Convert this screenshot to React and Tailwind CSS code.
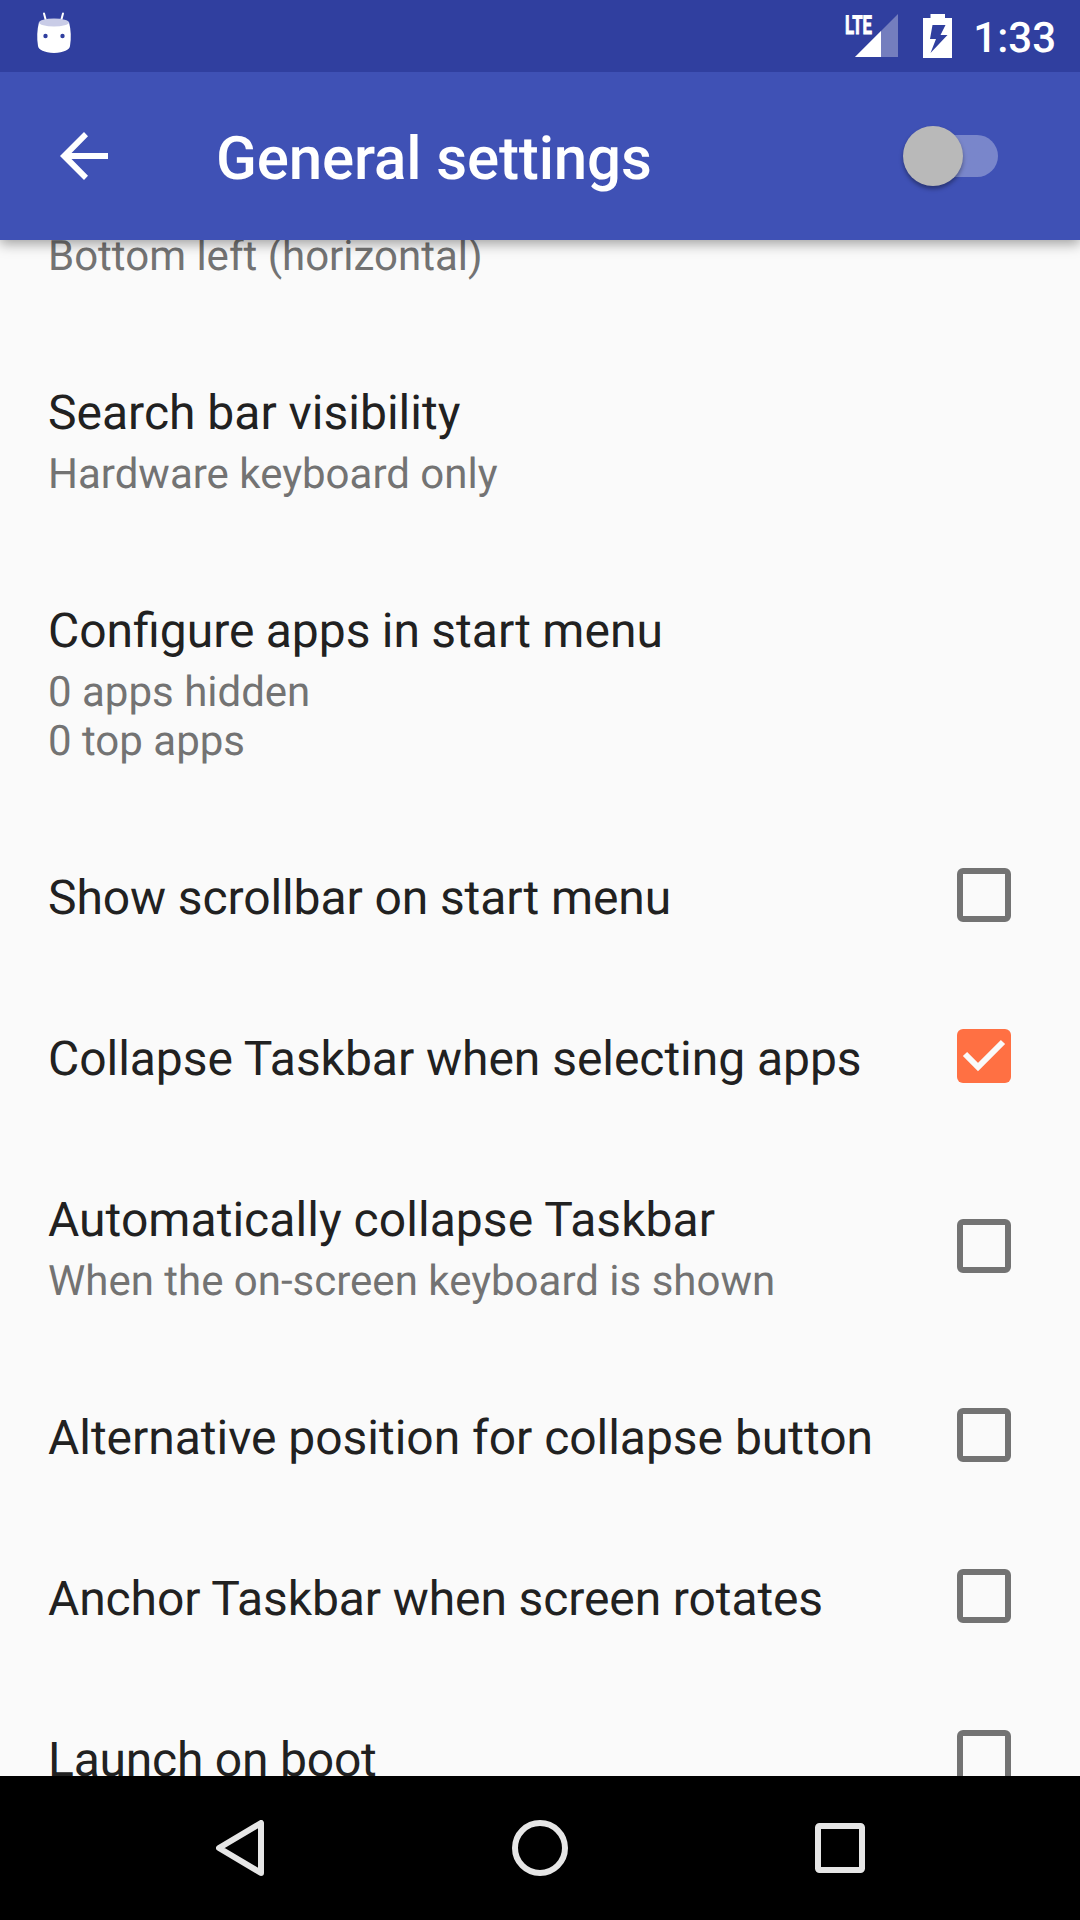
const items = [
  { title: "Search bar visibility", lines: ["Hardware keyboard only"], height: "h-[218px]" },
  { title: "Configure apps in start menu", lines: ["0 apps hidden", "0 top apps"], height: "h-[267px]", spacing: "[word-spacing:-0.6px]" },
  { title: "Show scrollbar on start menu", lines: [], height: "h-[161px]", check: true, spacing: "tracking-[-0.1px]" },
  { title: "Collapse Taskbar when selecting apps", lines: [], height: "h-[161px]", check: true, on: true, spacing: "tracking-[-0.04px]" },
  { title: "Automatically collapse Taskbar", lines: ["When the on-screen keyboard is shown"], height: "h-[218px]", check: true, spacing: "tracking-[0.05px]" },
  { title: "Alternative position for collapse button", lines: [], height: "h-[161px]", check: true, spacing: "tracking-[-0.03px]" },
  { title: "Anchor Taskbar when screen rotates", lines: [], height: "h-[161px]", check: true, spacing: "tracking-[-0.11px]" },
  { title: "Launch on boot", lines: [], height: "h-[161px]", check: true, spacing: "tracking-[-0.22px]" },
];

function Checkbox({ on }) {
  return (
    <svg className="mr-[21px] mt-px size-[54px] shrink-0" viewBox="0 0 54 54" fill="none">
      {on ? (
        <>
          <rect width="54" height="54" rx="6" fill="#ff7043" />
          <path d="M8 25L21 38L46 13" stroke="#fafafa" strokeWidth="6" />
        </>
      ) : (
        <path fillRule="evenodd" fill="#737373" d="M6 0H48A6 6 0 0 1 54 6V48A6 6 0 0 1 48 54H6A6 6 0 0 1 0 48V6A6 6 0 0 1 6 0ZM6 6V48H48V6Z" />
      )}
    </svg>
  );
}

function NotificationIcon() {
  return (
    <svg className="mt-[-6px] h-[42px] w-[36px]" viewBox="0 0 36 42">
      <path d="M8 1.5L10 9M27 1.5L25 9" stroke="#fff" strokeWidth="2" strokeLinecap="round" />
      <path d="M3 10C8 15 28 15 33 10Q36 22 34 34Q33 40 18 41Q3 40 2 34Q0 22 3 10Z" fill="#fff" />
      <ellipse cx="18" cy="10.5" rx="15" ry="4" fill="#c9cce7" />
      <circle cx="9.5" cy="24" r="2.2" fill="#303f9f" />
      <circle cx="26.5" cy="24" r="2.2" fill="#303f9f" />
    </svg>
  );
}

function SignalIcon() {
  return (
    <svg className="ml-auto h-[72px] w-[53px]" viewBox="0 0 53 72">
      <path d="M10 57L53 14V57Z" fill="#fff" fillOpacity="0.33" />
      <path d="M10 57L36 31V57Z" fill="#fff" />
      <text x="0" y="33.5" textLength="27" lengthAdjust="spacingAndGlyphs" fill="#fff" stroke="#fff" strokeWidth="0.9" fontSize="26" fontWeight="700">LTE</text>
    </svg>
  );
}

function BatteryIcon() {
  return (
    <svg className="ml-[25px] h-[44px] w-[29px]" viewBox="0 0 29 44">
      <path fillRule="evenodd" fill="#fff" d="M7.5 0H22V4H29V44H0V4H7.5ZM9.5 11L7 25H13L7.5 39L24.5 21H17.5L22.5 11Z" />
    </svg>
  );
}

export default function App() {
  return (
    <div className="flex h-[1920px] w-[1080px] flex-col overflow-hidden bg-[#fafafa] font-['Roboto',sans-serif] [text-rendering:geometricPrecision]">
      <header className="z-10 shrink-0 bg-[#3f51b5] text-white shadow-[0_4px_12px_rgba(0,0,0,0.36)]">
        <div className="flex h-[72px] items-center bg-[#303f9f] pl-[36px] pr-[24px]">
          <NotificationIcon />
          <SignalIcon />
          <BatteryIcon />
          <span className="ml-[21px] mt-[4px] text-[42px] font-medium">1:33</span>
        </div>
        <div className="flex h-[168px] items-center pl-[60px] pr-[82px]">
          <svg className="size-[48px]" viewBox="0 0 48 48"><path fill="#fff" d="M48 21H11.5L28 4.2L24 0L0 24L24 48L28 43.8L11.5 27H48Z" /></svg>
          <h1 className="ml-[108px] mt-[5px] text-[60px] font-medium tracking-[-0.13px]">General settings</h1>
          <div className="ml-auto flex h-[42px] w-[95px] items-center rounded-full bg-gradient-to-r from-transparent from-30% to-[#7986cb] to-30%">
            <div className="mb-px size-[60px] shrink-0 rounded-full bg-[#b9b9b9] shadow-[0_3px_4px_rgba(0,0,0,0.35)]" />
          </div>
        </div>
      </header>
      <main className="min-h-0 flex-1 overflow-hidden">
        <div className="h-[97px] px-[48px] text-[42px] leading-[49px] text-[#737373]"><p className="-mt-[8px]">Bottom left (horizontal)</p></div>
        {items.map((item) => (
          <div key={item.title} className={`flex ${item.height} items-center justify-between px-[48px]`}>
            <div className={item.lines.length > 0 ? "pt-[8px]" : "pt-[6px]"}>
              <h2 className={`text-[48px] leading-[56px] text-[#212121] ${item.spacing ?? ""}`}>{item.title}</h2>
              {item.lines.length > 0 && (
                <div className="mt-[9px]">
                  {item.lines.map((line) => <p key={line} className="text-[42px] leading-[49px] text-[#737373]">{line}</p>)}
                </div>
              )}
            </div>
            {item.check && <Checkbox on={item.on} />}
          </div>
        ))}
      </main>
      <nav className="z-10 flex h-[144px] shrink-0 items-center justify-between bg-black pl-[216px] pr-[215px]">
        <svg className="h-[56px] w-[48px]" viewBox="0 0 48 56" fill="none" stroke="#e6e6e6" strokeWidth="6" strokeLinejoin="round"><path d="M45 3V53L3 28Z" /></svg>
        <svg className="size-[56px]" viewBox="0 0 56 56" fill="none" stroke="#e6e6e6" strokeWidth="6"><circle cx="28" cy="28" r="25" /></svg>
        <svg className="size-[50px]" viewBox="0 0 50 50" fill="none" stroke="#e6e6e6" strokeWidth="6"><rect x="3" y="3" width="44" height="44" rx="1.5" /></svg>
      </nav>
    </div>
  );
}
